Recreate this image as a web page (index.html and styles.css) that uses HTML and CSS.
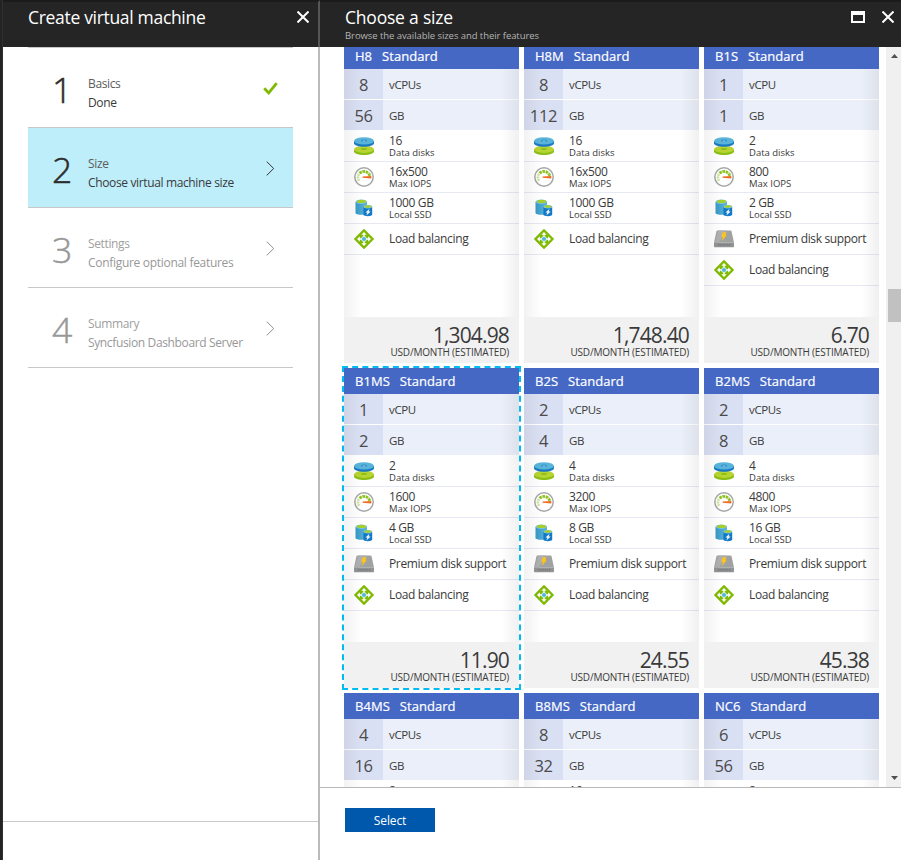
FILE: index.html
```html
<!DOCTYPE html>
<html lang="en">
<head>
<meta charset="utf-8">
<title>Create virtual machine</title>
<link rel="stylesheet" href="styles.css">
</head>
<body>
<svg class="defs" aria-hidden="true">
  <defs>
    <linearGradient id="edge" x1="0" x2="1"><stop offset="0" stop-color="#3999c6"/><stop offset="1" stop-color="#59b4d9"/></linearGradient>
  </defs>
  <symbol id="disks" viewBox="0 0 20 20">
    <path d="M0 13.200v2.300c0 4.600 20 4.600 20 0v-2.300z" fill="#8cbf16"/>
    <ellipse cx="10" cy="13.300" rx="9.900" ry="3.600" fill="#b8d432"/>
    <ellipse cx="10" cy="13" rx="3.200" ry="1.100" fill="#8cbf16"/>
    <path d="M0 4.900v2.300c0 4.600 20 4.600 20 0V4.900z" fill="#1a78c4"/>
    <ellipse cx="10" cy="4.900" rx="9.900" ry="3.600" fill="#59b4d9"/>
    <ellipse cx="10" cy="4.800" rx="3" ry="1.200" fill="#2f8fcc"/>
    <ellipse cx="10" cy="5" rx="1.500" ry=".6" fill="#b5dcee"/>
  </symbol>
  <symbol id="gauge" viewBox="0 0 20 20">
    <circle cx="10" cy="10" r="9.200" fill="#fff" stroke="#a6a7a8" stroke-width="1.500"/>
    <path d="M5.200 13.800A6 6 0 0 1 5.300 6.500" fill="none" stroke="#cfe49c" stroke-width="2.600" stroke-dasharray="2 .6"/>
    <path d="M5.600 6.300A6 6 0 0 1 15.800 9" fill="none" stroke="#8cc321" stroke-width="2.800" stroke-dasharray="2.600 .7"/>
    <path d="M8.600 9.400l8.700-.4v2.600l-8.700-.8z" fill="#f26a22"/>
  </symbol>
  <symbol id="ssd" viewBox="0 0 20 20">
    <path d="M1.500 4v11c0 2.400 11.500 2.400 11.500 0V4z" fill="url(#edge)"/>
    <ellipse cx="7.300" cy="3.700" rx="5.800" ry="2.200" fill="#7cc3e1"/>
    <ellipse cx="7.500" cy="3.400" rx="4.500" ry="1.600" fill="#a5cf2a"/>
    <path d="M9.400 8.800v8c0 1.900 8.800 1.900 8.800 0v-8z" fill="#1279c9"/>
    <ellipse cx="13.800" cy="8.700" rx="4.400" ry="1.700" fill="#7cc3e1"/>
    <ellipse cx="13.800" cy="8.500" rx="3.400" ry="1.200" fill="#a5cf2a"/>
    <path d="M15.500 10.800l-4 3.700h2l-1.200 3 4.400-4.100h-2.100z" fill="#fff"/>
  </symbol>
  <symbol id="premium" viewBox="0 0 20 20">
    <path d="M3.600 1.500h12.800c.7 0 1.100.3 1.200.9L20 13.500H0L2.400 2.400c.1-.6.500-.9 1.200-.9z" fill="#a0a1a2"/>
    <path d="M4 1.500h8L5 13.500H1z" fill="#aeafb0"/>
    <path d="M0 13.500h20v3.700c0 .6-.4 1-1 1H1c-.6 0-1-.4-1-1z" fill="#929394"/>
    <path d="M4 15.800h12.500" stroke="#707274" stroke-width="1.300" stroke-dasharray="1.400 .8"/>
    <path d="M8.700 3.200h3.800l-1 3h1.300L7.600 12.200l1.300-4.200H7.400z" fill="#fcc41c"/>
  </symbol>
  <symbol id="balance" viewBox="0 0 20 20">
    <path d="M10 .9L19.100 10 10 19.100.9 10z" fill="#7fba00" stroke="#7fba00" stroke-width="1.600" stroke-linejoin="round"/>
    <path d="M10 3l2.700 2.800h-2v3.500h3.500v-2L17 10l-2.800 2.700v-2h-3.500v3.500h2L10 17l-2.700-2.800h2v-3.500H5.800v2L3 10l2.800-2.700v2h3.500V5.800h-2z" fill="#fff"/>
    <circle cx="10" cy="10" r="2.500" fill="#59b4d9" stroke="#fff" stroke-width=".7"/>
  </symbol>
</svg>

<div class="portal">
  <div class="edge"></div>

  <section class="blade steps-blade">
    <header class="blade-head">
      <h1 class="title">Create virtual machine</h1>
      <svg class="close" viewBox="0 0 12 12"><path d="M.5.500l11 11M11.500.500l-11 11"/></svg>
    </header>
    <ol class="steps">
      <li class="step done">
        <span class="num">1</span>
        <span class="about"><span class="name">Basics</span><span class="detail">Done</span></span>
        <svg class="tick" viewBox="0 0 15 13"><path d="M1.200 6.300l4.500 4.600L13.700 1.200"/></svg>
      </li>
      <li class="step current">
        <span class="num">2</span>
        <span class="about"><span class="name">Size</span><span class="detail">Choose virtual machine size</span></span>
        <svg class="chevron" viewBox="0 0 9 15"><path d="M.7.600l7 6.900-7 6.900"/></svg>
      </li>
      <li class="step pending">
        <span class="num">3</span>
        <span class="about"><span class="name">Settings</span><span class="detail looser">Configure optional features</span></span>
        <svg class="chevron" viewBox="0 0 9 15"><path d="M.7.600l7 6.900-7 6.900"/></svg>
      </li>
      <li class="step pending">
        <span class="num">4</span>
        <span class="about"><span class="name">Summary</span><span class="detail">Syncfusion Dashboard Server</span></span>
        <svg class="chevron" viewBox="0 0 9 15"><path d="M.7.600l7 6.900-7 6.900"/></svg>
      </li>
    </ol>
    <footer class="steps-foot"></footer>
  </section>

  <section class="blade size-blade">
    <header class="blade-head">
      <div class="heading">
        <h2 class="title">Choose a size</h2>
        <p class="subtitle">Browse the available sizes and their features</p>
      </div>
      <svg class="maximize" viewBox="0 0 14 12"><path d="M0 0h14v12H0zM2 4v6h10V4z" fill-rule="evenodd"/></svg>
      <svg class="close" viewBox="0 0 12 12"><path d="M.5.500l11 11M11.500.500l-11 11"/></svg>
    </header>
    <div class="viewport">
      <div class="grid" id="sizes"></div>
      <div class="scrollbar">
        <svg class="arrow" viewBox="0 0 7 4"><path d="M0 4L3.500 0 7 4z"/></svg>
        <div class="track"><div class="thumb"></div></div>
        <svg class="arrow" viewBox="0 0 7 4"><path d="M0 0l3.500 4L7 0z"/></svg>
      </div>
    </div>
    <footer class="size-foot"><button class="select">Select</button></footer>
  </section>
</div>
<script src="sizes.js"></script>
</body>
</html>
```
FILE: styles.css
```css
* { box-sizing: border-box; }
body {
  margin: 0;
  overflow: hidden;
  background: #fff;
  color: #3a3a3a;
  font-family: "Open Sans", "Noto Sans", sans-serif;
  font-size: 12px;
  letter-spacing: -0.03em;
}
h1, h2, p, ol { margin: 0; padding: 0; font-weight: 400; }
ol { list-style: none; }
svg { display: block; flex: none; }
.defs { position: absolute; width: 0; height: 0; }

.portal { display: flex; width: 901px; height: 860px; }
.edge { flex: none; width: 3px; background: #232323; border-right: 1px solid #303030; }
.blade { display: flex; flex-direction: column; min-width: 0; }
.blade-head {
  flex: none;
  display: flex;
  height: 47px;
  background: #252525;
  border-top: 2px solid #1b1b1b;
  color: #fff;
}
.title { flex: 1; font-size: 17.500px; line-height: 24px; letter-spacing: -0.018em; white-space: nowrap; }
.size-blade .title { letter-spacing: -0.012em; }
.close { width: 12px; height: 12px; fill: none; stroke: #fff; stroke-width: 2; }

.steps-blade { width: 317px; border-right: 2px solid #bababa; }
.steps-blade .blade-head { margin-right: -2px; padding: 3px 9px 0 25px; border-right: 2px solid #555; }
.steps-blade .close, .size-blade .close { margin-top: 6px; }
.steps { flex: 1; padding: 0 25px; }
.step {
  display: flex;
  align-items: flex-start;
  height: 80px;
  border-top: 1px solid #c8c8c8;
}
.step:last-child { height: 81px; border-bottom: 1px solid #c8c8c8; }
.step.current { background: #beeefa; }
.num {
  width: 60px;
  padding-left: 24px;
  font-size: 35.500px;
  font-weight: 300;
  line-height: 50px;
  margin-top: 16px;
  letter-spacing: 0;
  color: #2c2c2c;
  -webkit-text-stroke: 0.5px currentColor;
}
.about { flex: 1; display: flex; flex-direction: column; padding-top: 26px; line-height: 19px; white-space: nowrap; }
.name { color: #5c5c5c; }
.looser { letter-spacing: -0.025em; }
.pending, .pending .num { color: #989898; }
.pending .name { color: #a0a0a0; }
.tick { width: 15px; height: 13px; margin: 34px 15px 0 0; fill: none; stroke: #7fba00; stroke-width: 2.800; }
.chevron { width: 9px; height: 15px; margin: 33px 18px 0 0; fill: none; stroke: #333; }
.pending .chevron { stroke: #909090; }
.steps-foot { flex: none; height: 39px; border-top: 1px solid #c8c8c8; }

.size-blade { flex: 1; }
.size-blade .blade-head { padding: 3px 7px 0 25px; }
.heading { flex: 1; }
.subtitle { padding-top: 1px; font-size: 9.500px; line-height: 11px; color: #b4b4b4; white-space: nowrap; letter-spacing: -0.007em; }
.maximize { width: 14px; height: 12px; margin: 6px 17px 0 0; fill: #fff; }

.viewport { flex: none; display: flex; justify-content: space-between; height: 740px; overflow: hidden; }
.grid {
  display: grid;
  grid-template-columns: repeat(3, 175px);
  grid-auto-rows: 320px;
  gap: 5px;
  margin: -4px 0 0 24px;
}
.card { position: relative; display: flex; flex-direction: column; background: #fff; }
.card.selected { outline: 2px dashed #00bcf2; }
.card-head {
  display: flex;
  gap: 10px;
  height: 26px;
  padding-left: 11px;
  background: #4668c5;
  color: #fff;
  font-size: 13px;
  line-height: 26px;
  letter-spacing: 0.003em;
  -webkit-text-stroke: 0.2px #fff;
}
.card-body { position: relative; flex: 1; }
.card-body::after {
  content: "";
  position: absolute;
  inset: 0;
  background: linear-gradient(90deg, rgba(0,0,0,.05), transparent 18px calc(100% - 18px), rgba(0,0,0,.06));
}
.spec { display: flex; height: 31px; border-bottom: 1px solid #fff; background: #ebeff9; line-height: 31px; font-size: 11.500px; }
.amount { width: 39px; margin-right: 6px; background: #dae0f3; text-align: center; font-size: 16.500px; letter-spacing: -0.02em; color: #4a4a4a; }
.feature { display: flex; align-items: center; height: 31px; padding-left: 10px; border-bottom: 1px solid #e6e8f4; }
.feature svg { width: 20px; height: 20px; margin-right: 15px; }
.text { line-height: 16px; padding-bottom: 1px; letter-spacing: -0.030em; }
.pair { display: flex; flex-direction: column; }
.value { line-height: 13px; }
.caption { font-size: 9.500px; line-height: 11px; letter-spacing: 0; }
.card-foot { height: 46px; padding: 6px 10px 0 0; background: #f1f1f1; text-align: right; }
.price { font-size: 21px; line-height: 25px; letter-spacing: -0.040em; }
.unit { font-size: 10px; line-height: 9px; letter-spacing: -0.018em; }

.scrollbar { display: flex; flex-direction: column; align-items: center; width: 15px; padding: 7px 0; background: #f0f0f0; }
.arrow { width: 7px; height: 4px; margin-left: 2px; fill: #505050; }
.track { flex: 1; width: 13px; margin-left: 2px; }
.thumb { height: 33px; margin-top: 231px; background: #c1c1c1; }
.size-foot { flex: 1; padding: 20px 0 0 25px; border-top: 1px solid #b8b8b8; }
.select {
  display: block;
  width: 90px;
  height: 24px;
  padding: 0;
  border: 0;
  background: #0058ad;
  color: #fff;
  font: inherit;
  letter-spacing: -0.01em;
}
```
FILE: sizes.js
```js
const sizes = [
  { name: "H8", cpus: 8, gb: 56, disks: 16, iops: "16x500", ssd: "1000 GB", price: "1,304.98" },
  { name: "H8M", cpus: 8, gb: 112, disks: 16, iops: "16x500", ssd: "1000 GB", price: "1,748.40" },
  { name: "B1S", cpus: 1, gb: 1, disks: 2, iops: "800", ssd: "2 GB", premium: true, price: "6.70" },
  { name: "B1MS", cpus: 1, gb: 2, disks: 2, iops: "1600", ssd: "4 GB", premium: true, price: "11.90", selected: true },
  { name: "B2S", cpus: 2, gb: 4, disks: 4, iops: "3200", ssd: "8 GB", premium: true, price: "24.55" },
  { name: "B2MS", cpus: 2, gb: 8, disks: 4, iops: "4800", ssd: "16 GB", premium: true, price: "45.38" },
  { name: "B4MS", cpus: 4, gb: 16, disks: 8 },
  { name: "B8MS", cpus: 8, gb: 32, disks: 16 },
  { name: "NC6", cpus: 6, gb: 56, disks: 8 }
];

const icon = id => `<svg><use href="#${id}"/></svg>`;
const pair = (id, value, caption) =>
  `<div class="feature">${icon(id)}<div class="pair"><span class="value">${value}</span><span class="caption">${caption}</span></div></div>`;
const single = (id, text) => `<div class="feature">${icon(id)}<span class="text">${text}</span></div>`;
const spec = (amount, label) => `<div class="spec"><span class="amount">${amount}</span><span>${label}</span></div>`;

document.getElementById("sizes").innerHTML = sizes.map(s => `
  <article class="card${s.selected ? " selected" : ""}">
    <div class="card-head"><span>${s.name}</span><span>Standard</span></div>
    <div class="card-body">
      ${spec(s.cpus, s.cpus === 1 ? "vCPU" : "vCPUs")}
      ${spec(s.gb, "GB")}
      ${pair("disks", s.disks, "Data disks")}
      ${s.iops ? pair("gauge", s.iops, "Max IOPS") + pair("ssd", s.ssd, "Local SSD") : ""}
      ${s.premium ? single("premium", "Premium disk support") : ""}
      ${s.price ? single("balance", "Load balancing") : ""}
    </div>
    ${s.price ? `<div class="card-foot"><div class="price">${s.price}</div><div class="unit">USD/MONTH (ESTIMATED)</div></div>` : ""}
  </article>`).join("");
```
